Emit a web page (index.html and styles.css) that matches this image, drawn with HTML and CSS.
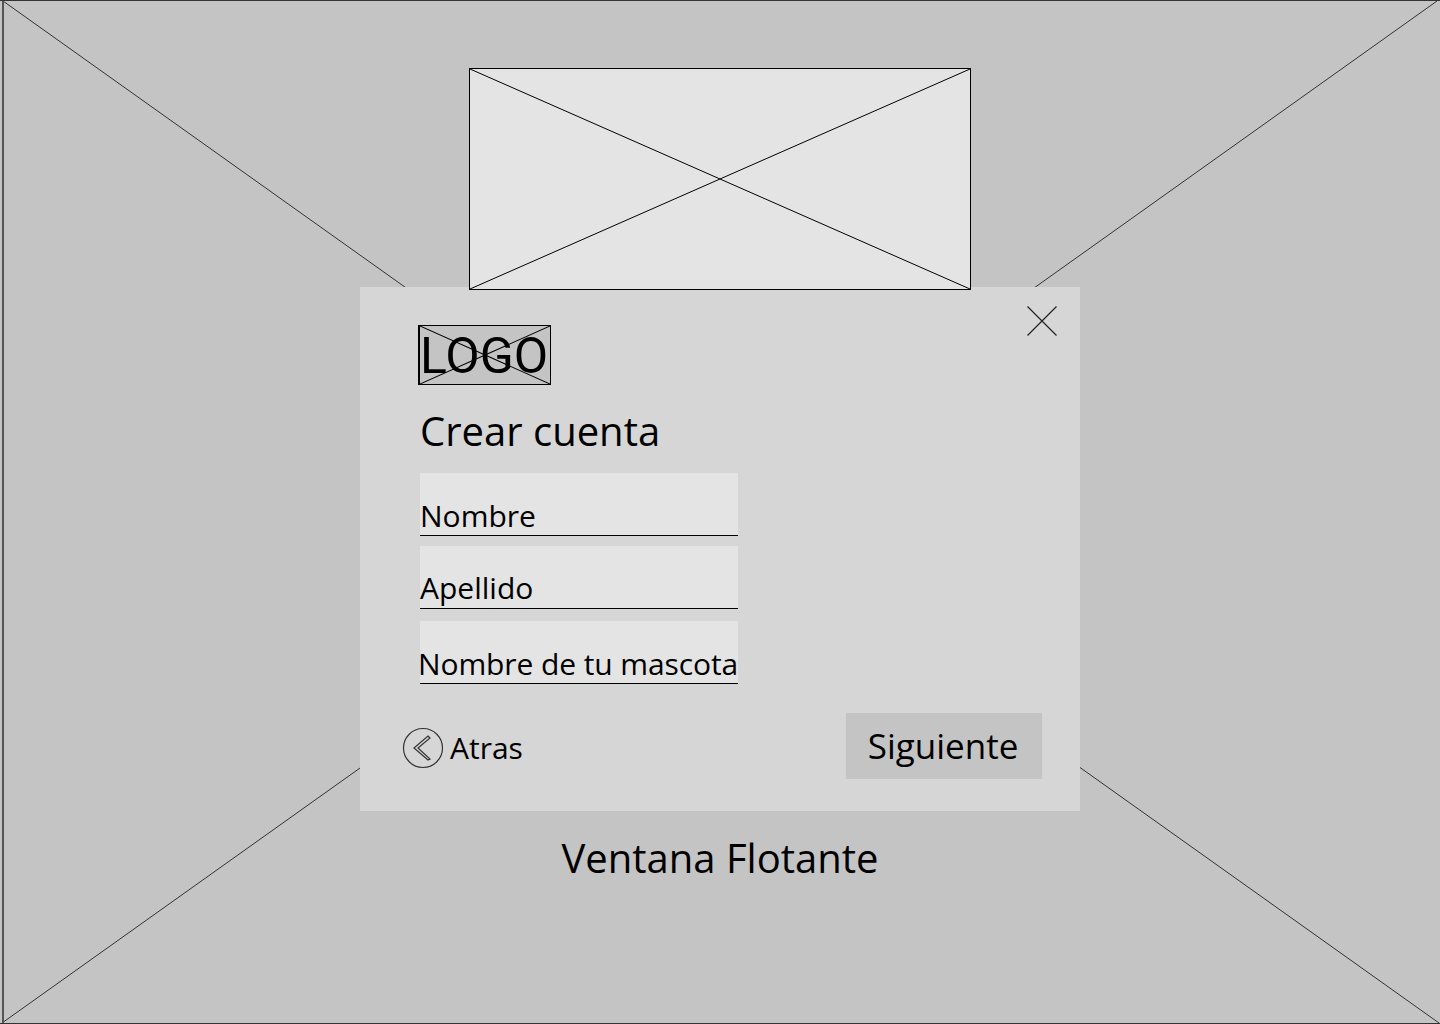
FILE: index.html

```html
<!DOCTYPE html>
<html lang="es">
<head>
  <meta charset="UTF-8" />
  <meta name="viewport" content="width=device-width, initial-scale=1.0" />
  <title>Ventana Flotante</title>
  <link rel="stylesheet" href="styles.css">
</head>
<body>
  <div class="page">
    <svg class="cross" viewBox="0 0 1440 1024" preserveAspectRatio="none">
      <path d="M3 1L1439 1023M1437 1L2 1023" />
      <path class="edge" d="M3 0V1024" />
    </svg>

    <div class="hero">
      <svg class="cross" viewBox="0 0 500 220" preserveAspectRatio="none">
        <path d="M0 0L500 220M500 0L0 220" />
      </svg>
    </div>

    <div class="modal">
      <svg class="close" viewBox="0 0 32 32">
        <path d="M1.500 1.500L30.500 30.500M30.500 1.500L1.500 30.500" />
      </svg>

      <div class="logo">
        <svg class="cross" viewBox="0 0 132 58" preserveAspectRatio="none">
          <path d="M0 0L132 58M132 0L0 58" />
        </svg>
        <span>LOGO</span>
      </div>

      <h1>Crear cuenta</h1>

      <div class="field field-first"><span>Nombre</span></div>
      <div class="field"><span>Apellido</span></div>
      <div class="field field-last"><span>Nombre de tu mascota</span></div>

      <div class="actions">
        <div class="back">
          <svg class="back-icon" viewBox="0 0 42 42">
            <circle cx="21" cy="21" r="19.500" />
            <path d="M26 9L28 11L16 21L28 32L26 33L12 21Z" />
          </svg>
          <span>Atras</span>
        </div>
        <div class="next">Siguiente</div>
      </div>
    </div>

    <div class="caption">Ventana Flotante</div>
  </div>
</body>
</html>
```

FILE: styles.css

```css
body {
  margin: 0;
  font-family: 'Open Sans', sans-serif;
  color: #000;
}
.page {
  position: relative;
  box-sizing: border-box;
  width: 1440px;
  height: 1024px;
  padding-top: 68px;
  display: flex;
  flex-direction: column;
  align-items: center;
  overflow: hidden;
  background: #c4c4c4;
  border-top: 1px solid #333;
  border-bottom: 1px solid #333;
}
.cross {
  position: absolute;
  top: 0;
  left: 0;
  width: 100%;
  height: 100%;
}
.cross path {
  fill: none;
  stroke: #000;
  stroke-width: 1;
  vector-effect: non-scaling-stroke;
}
.page > .cross {
  top: -1px;
  width: 1440px;
  height: 1024px;
}
.page > .cross path {
  stroke: #333;
}
.page > .cross .edge {
  stroke: #555;
  stroke-width: 2;
}
.hero {
  position: relative;
  z-index: 2;
  box-sizing: border-box;
  flex: none;
  width: 502px;
  height: 222px;
  margin-top: -1px;
  background: #e4e4e4;
  border: 1px solid #000;
}
.modal {
  position: relative;
  z-index: 1;
  box-sizing: border-box;
  flex: none;
  width: 720px;
  height: 524px;
  margin-top: -3px;
  padding: 38px 38px 0 58px;
  background: #d6d6d6;
}
.close {
  position: absolute;
  top: 18px;
  right: 22px;
  width: 32px;
  height: 32px;
}
.close path {
  fill: none;
  stroke: #222;
  stroke-width: 1.2;
}
.logo {
  position: relative;
  box-sizing: border-box;
  width: 133px;
  height: 60px;
  background: #c4c4c4;
  border: 1px solid #000;
  border-left-width: 2px;
  font-family: Roboto, sans-serif;
  font-size: 50px;
  line-height: 60px;
  white-space: nowrap;
}
.logo span {
  position: relative;
}
h1 {
  margin: 19px 0 0 2px;
  font-size: 40px;
  font-weight: 400;
  line-height: 54px;
}
.field {
  box-sizing: border-box;
  width: 318px;
  height: 63px;
  margin: 10px 0 0 2px;
  padding-top: 22px;
  background: #e4e4e4;
  border-bottom: 1px solid #000;
  font-size: 30px;
  line-height: 40px;
  white-space: nowrap;
}
.field-first {
  margin-top: 15px;
  padding-top: 23px;
}
.field-last {
  margin-top: 12px;
  padding-top: 23px;
}
.field-last span {
  margin-left: -2px;
  letter-spacing: -0.1px;
}
.actions {
  display: flex;
  justify-content: space-between;
  align-items: center;
  height: 66px;
  margin: 29px 0 0 -16px;
}
.back {
  display: flex;
  align-items: center;
  gap: 6px;
  padding-top: 4px;
  font-size: 30px;
  line-height: 40px;
}
.back-icon {
  width: 42px;
  height: 42px;
}
.back-icon circle,
.back-icon path {
  fill: none;
  stroke: #333;
  stroke-width: 1.2;
}
.next {
  box-sizing: border-box;
  width: 196px;
  height: 66px;
  padding-right: 2px;
  background: #c4c4c4;
  font-size: 35px;
  line-height: 66px;
  text-align: center;
}
.caption {
  margin-top: 20px;
  font-size: 40px;
  line-height: 54px;
}
```
